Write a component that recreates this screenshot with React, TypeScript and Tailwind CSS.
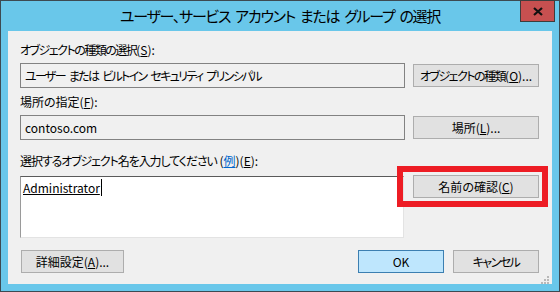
import React from "react";

const font = { fontFamily: '"Noto Sans CJK JP", "Noto Sans", sans-serif' };

function Btn({ children, w, primary }: { children: React.ReactNode; w: string; primary?: boolean }) {
  return (
    <div
      className={`${w} h-[23px] flex items-center justify-center whitespace-nowrap text-[12px] text-black border ${
        primary ? "bg-[#bee6fd] border-[#3c7fb1]" : "bg-[#e1e1e1] border-[#adadad]"
      }`}
    >
      {children}
    </div>
  );
}

export default function App() {
  return (
    <div
      className="w-[560px] h-[292px] bg-[#69c7ea] border border-[#3d4a52] flex flex-col relative [font-feature-settings:'palt'] leading-none"
      style={font}
    >
      {/* Title bar */}
      <div className="h-[30px] flex items-center justify-center text-[15px] tracking-[-1.3px] [word-spacing:3px] text-black pb-[2px] whitespace-nowrap">
        ユーザー、サービス アカウント または グループ の選択
      </div>
      <div className="absolute top-[-1px] right-[4px] w-[35px] h-[22px] bg-[#c75050] border border-[#3d3d3d] flex items-center justify-center">
        <svg width="10" height="9" viewBox="0 0 10 9">
          <path d="M1 1 L9 8 M9 1 L1 8" stroke="#111" strokeWidth="2.2" />
        </svg>
      </div>

      {/* Client */}
      <div className="mx-[7px] w-[544px] h-[253px] bg-[#f0f0f0] relative flex flex-col pl-[12px] pr-[13px] pt-[13px]">
        <div className="text-[12px] h-[16px] text-black tracking-[-1.5px] whitespace-nowrap">
          オブジェクトの種類の選択<span className="tracking-normal">(<span className="underline">S</span>):</span>
        </div>
        <div className="mt-[3px] flex items-start gap-[8px]">
          <div className="w-[385px] h-[25px] border border-[#828282] bg-[#f0f0f0] flex items-center px-[4px] text-[12px] text-black tracking-[-1.7px] [word-spacing:3px] whitespace-nowrap">
            ユーザー または ビルトイン セキュリティ プリンシパル
          </div>
          <div className="mt-[1px]">
            <Btn w="w-[126px]">
              <span className="tracking-[-1.5px]">オブジェクトの種類</span>(<span className="underline">O</span>)...
            </Btn>
          </div>
        </div>

        <div className="mt-[8px] text-[12px] h-[16px] text-black whitespace-nowrap">
          場所の指定(<span className="underline">F</span>):
        </div>
        <div className="mt-[3px] flex items-start gap-[8px]">
          <div className="w-[385px] h-[25px] border border-[#828282] bg-[#f0f0f0] flex items-center px-[4px] text-[12px] text-black">
            contoso.com
          </div>
          <div className="mt-[1px]">
            <Btn w="w-[126px]">
              場所(<span className="underline">L</span>)...
            </Btn>
          </div>
        </div>

        <div className="mt-[15px] text-[12px] h-[16px] text-black whitespace-nowrap">
          <span className="tracking-[-1.1px]">選択するオブジェクト名を入力してください</span> (
          <span className="underline text-[#0066cc]">例</span>)(<span className="underline">E</span>):
        </div>
        <div className="mt-[5px] flex items-start gap-[9px]">
          <div className="w-[384px] h-[62px] bg-white border-t border-l border-r border-b border-t-[#5a5a5a] border-l-[#9a9a9a] border-r-[#e3e3e3] border-b-[#e3e3e3] px-[2px] pt-[3px] text-[12px] text-black flex items-start">
            <span className="underline leading-[16px]">Administrator</span>
            <span className="w-[1px] h-[17px] bg-black ml-[1px] mt-[-1px]" />
          </div>
          <div className="mt-[-1px]">
            <Btn w="w-[126px]">
              名前の確認(<span className="underline">C</span>)
            </Btn>
          </div>
        </div>

        <div className="mt-[12px] flex items-start">
          <div className="ml-[1px]">
            <Btn w="w-[103px]">
              詳細設定(<span className="underline">A</span>)...
            </Btn>
          </div>
          <div className="ml-auto flex gap-[9px]">
            <Btn w="w-[86px]" primary>
              OK
            </Btn>
            <Btn w="w-[86px]">
              <span className="tracking-[-1.5px]">キャンセル</span>
            </Btn>
          </div>
        </div>

        {/* red annotation */}
        <div className="absolute left-[389px] top-[135px] w-[151px] h-[41px] border-[6px] border-[#ed1c24]" />

        {/* resize grip */}
        <svg className="absolute left-[533px] top-[245px]" width="9" height="9" viewBox="0 0 9 9">
          <rect x="6" y="0" width="2" height="2" fill="#b8b8b8" />
          <rect x="3" y="3" width="2" height="2" fill="#b8b8b8" />
          <rect x="6" y="3" width="2" height="2" fill="#b8b8b8" />
          <rect x="0" y="6" width="2" height="2" fill="#b8b8b8" />
          <rect x="3" y="6" width="2" height="2" fill="#b8b8b8" />
          <rect x="6" y="6" width="2" height="2" fill="#b8b8b8" />
        </svg>
      </div>
    </div>
  );
}
